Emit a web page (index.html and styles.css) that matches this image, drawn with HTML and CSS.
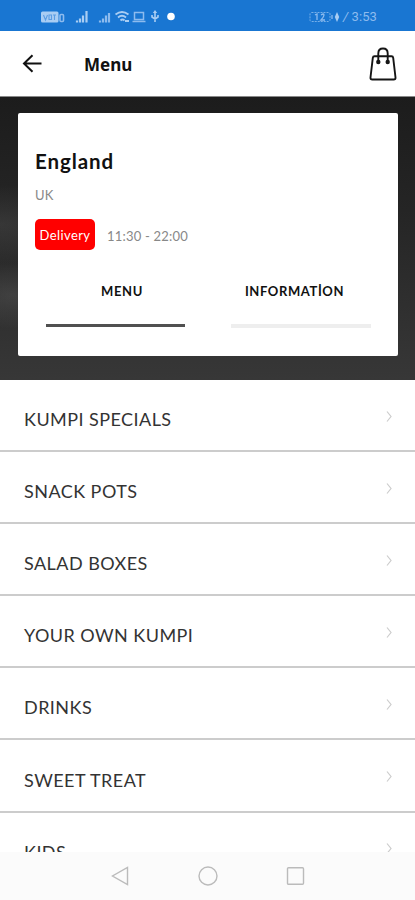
FILE: index.html
```html
<!DOCTYPE html>
<html lang="en">
<head>
    <meta charset="UTF-8">
    <meta name="viewport" content="width=device-width, initial-scale=1.0">
    <title>Menu</title>
    <link rel="stylesheet" href="styles.css">
</head>
<body>
    <div class="status-bar">
        <svg class="status-icons" width="136" height="16" viewBox="0 0 136 16">
            <!-- VoLTE badge -->
            <rect x="1" y="2.500" width="17.500" height="11" rx="1.500" fill="#a9cdf3"/>
            <path d="M3.500 6l2 5 2-5M9 6h2.500v4.500H9zM13 6h3M14.500 6v5" fill="none" stroke="#5b9de3" stroke-width="1.100"/>
            <rect x="20" y="5.500" width="3.500" height="7" rx="1" fill="none" stroke="#8dbbee" stroke-width="1.600"/>
            <!-- Signal -->
            <path d="M37 13.500v-2M40 13.500v-4M43 13.500V6.500M46.500 13.500V2" stroke="#a9cdf3" stroke-width="2.200"/>
            <path d="M60 13.500v-2M63 13.500v-4M66 13.500V6.500M69 13.500V4" stroke="#8dbbee" stroke-width="2.200"/>
            <!-- Wifi -->
            <path d="M75.500 5.500q6.500-5 13 0M78 8.500q4-3.500 8 0M80.500 11.500q2-2 4 0M85 12h4" fill="none" stroke="#a9cdf3" stroke-width="1.800"/>
            <!-- Laptop -->
            <path d="M94.500 3.500h9v7h-9zM92.500 12.500h13" fill="none" stroke="#8dbbee" stroke-width="1.500"/>
            <!-- Usb -->
            <path d="M115 3v10M112 6v2l3 2 3-2V6" fill="none" stroke="#a9cdf3" stroke-width="1.600"/>
            <path d="M115 1l2.200 3h-4.400z" fill="#a9cdf3"/>
            <circle cx="131" cy="7.500" r="3.800" fill="#fff"/>
        </svg>
        <div class="status-right">
            <svg width="33" height="12" viewBox="0 0 33 12">
                <rect x="3" y="1.500" width="20" height="9" rx="1.500" fill="none" stroke="#76afe9" stroke-dasharray="2 1"/>
                <path d="M8 4l2-1v6M14 4q3-2 3 0 0 2-3 5h4M25 4v4" fill="none" stroke="#8dbbee" stroke-width="1.300"/>
                <path d="M30 1l2.200 5-2.200 5-2.200-5z" fill="#a9cdf3"/>
            </svg>
            <span class="clock"><i>/</i> 3:53</span>
        </div>
    </div>

    <header class="header">
        <svg width="20" height="20" viewBox="0 0 20 20">
            <path d="M19.500 9.500H2M10.500 1.300L2 9.500l8.500 8.200" fill="none" stroke="#111" stroke-width="2"/>
        </svg>
        <h1>Menu</h1>
        <svg class="bag" width="28" height="34" viewBox="0 0 28 34">
            <path d="M5.500 9.300h17q1.500 0 1.700 1.500L26.500 30.500q.2 2-1.800 2H3.300q-2 0-1.800-2L3.800 10.800q.2-1.500 1.700-1.500z" fill="none" stroke="#151515" stroke-width="1.900"/>
            <path d="M9.300 15V6.500q0-5 4.700-5t4.700 5V15" fill="none" stroke="#151515" stroke-width="1.900"/>
            <circle cx="9.300" cy="15" r="2.200" fill="#151515"/>
            <circle cx="18.700" cy="15" r="2.200" fill="#151515"/>
        </svg>
    </header>

    <section class="hero">
        <div class="card">
            <h2>England</h2>
            <p class="country">UK</p>
            <div class="hours">
                <span class="badge">Delivery</span>
                <span class="time">11:30 - 22:00</span>
            </div>
            <div class="tabs">
                <div class="tab active"><span class="tab-menu">MENU</span></div>
                <div class="tab"><span class="tab-info">INFORMATİON</span></div>
            </div>
        </div>
    </section>

    <ul class="menu-list">
        <li><span>KUMPI SPECIALS</span><svg class="chevron" viewBox="0 0 6 11"><path d="M1 .5l4 5-4 5"/></svg></li>
        <li><span>SNACK POTS</span><svg class="chevron" viewBox="0 0 6 11"><path d="M1 .5l4 5-4 5"/></svg></li>
        <li><span>SALAD BOXES</span><svg class="chevron" viewBox="0 0 6 11"><path d="M1 .5l4 5-4 5"/></svg></li>
        <li><span>YOUR OWN KUMPI</span><svg class="chevron" viewBox="0 0 6 11"><path d="M1 .5l4 5-4 5"/></svg></li>
        <li><span>DRINKS</span><svg class="chevron" viewBox="0 0 6 11"><path d="M1 .5l4 5-4 5"/></svg></li>
        <li><span>SWEET TREAT</span><svg class="chevron" viewBox="0 0 6 11"><path d="M1 .5l4 5-4 5"/></svg></li>
        <li><span>KIDS</span><svg class="chevron" viewBox="0 0 6 11"><path d="M1 .5l4 5-4 5"/></svg></li>
    </ul>

    <nav class="nav-bar">
        <svg width="20" height="20" viewBox="0 0 20 20"><path d="M17.500 1.500v17L2.500 10z"/></svg>
        <svg width="20" height="20" viewBox="0 0 20 20"><circle cx="10" cy="10" r="9"/></svg>
        <svg width="20" height="20" viewBox="0 0 20 20"><rect x="1.500" y="1.700" width="16" height="16.500" rx="1"/></svg>
    </nav>
</body>
</html>
```
FILE: styles.css
```css
* {
    box-sizing: border-box;
}
body {
    margin: 0;
    height: 900px;
    display: flex;
    flex-direction: column;
    overflow: hidden;
    background: #fff;
    font-family: Lato, sans-serif;
    color: #111;
}
h1, h2, p, ul {
    margin: 0;
    padding: 0;
}
.status-bar {
    height: 31px;
    flex-shrink: 0;
    display: flex;
    justify-content: space-between;
    align-items: center;
    padding: 2px 38px 0 40px;
    background: #1976d2;
}
.status-right {
    display: flex;
    align-items: center;
    gap: 3px;
}
.clock {
    font-family: Roboto, sans-serif;
    font-size: 13px;
    letter-spacing: 0.1px;
    color: #8dbbee;
}
.header {
    height: 66px;
    flex-shrink: 0;
    display: flex;
    align-items: center;
    padding: 0 18px 0 22px;
    border-bottom: 1px solid #888;
}
.header h1 {
    margin: 2px 0 0 42px;
    font-family: "Noto Sans", sans-serif;
    font-size: 17px;
    font-weight: 700;
}
.bag {
    margin-left: auto;
}
.hero {
    height: 283px;
    flex-shrink: 0;
    padding: 16px 17px 24px 18px;
    background:
        radial-gradient(ellipse at 0 45%, rgba(120, 120, 120, 0.2), transparent 18%),
        radial-gradient(ellipse at 3% 70%, rgba(120, 120, 120, 0.25), transparent 12%),
        linear-gradient(#1c1c1c, #252525 40%, #373737);
}
.card {
    height: 243px;
    padding: 36px 17px 0;
    background: #fff;
    border-radius: 2px;
}
.card h2 {
    font-size: 20.5px;
    line-height: 24px;
    font-weight: 700;
    letter-spacing: 0.9px;
}
.country {
    margin-top: 13px;
    font-size: 13px;
    line-height: 18px;
    letter-spacing: 0.3px;
    color: #888;
}
.hours {
    display: flex;
    align-items: center;
    gap: 12px;
    margin-top: 15px;
}
.badge {
    width: 60px;
    height: 31px;
    line-height: 32px;
    text-align: center;
    font-size: 13px;
    letter-spacing: 0.4px;
    color: #fff;
    background: #f00;
    border-radius: 5px;
}
.time {
    padding-top: 2px;
    font-size: 13px;
    letter-spacing: 0.2px;
    color: #888;
}
.tabs {
    display: flex;
    justify-content: space-between;
    margin-top: 31px;
    padding: 0 10px 0 11px;
}
.tab {
    width: 140px;
    height: 47px;
    line-height: 20px;
    text-align: center;
    font-size: 13px;
    font-weight: 700;
    letter-spacing: 0.6px;
    border-bottom: 4px solid #eee;
    white-space: nowrap;
}
.tab.active {
    padding-left: 13px;
    border-bottom: 3px solid #505050;
    height: 46px;
    width: 139px;
}
.tab-info {
    padding-right: 13px;
}
.menu-list {
    flex: 1;
    min-height: 0;
    overflow: hidden;
    list-style: none;
}
.menu-list li {
    height: 72.1px;
    display: flex;
    align-items: center;
    justify-content: space-between;
    padding: 8px 23px 0 24px;
    border-bottom: 2px solid #ccc;
    font-size: 18px;
    letter-spacing: 0.45px;
    color: #333;
}
.chevron {
    width: 6px;
    height: 11px;
    margin-bottom: 6px;
    fill: none;
    stroke: #ccc;
    stroke-width: 1.2;
}
.nav-bar {
    height: 48px;
    flex-shrink: 0;
    display: flex;
    justify-content: center;
    align-items: center;
    gap: 68px;
    background: #fbfbfb;
}
.nav-bar svg {
    fill: none;
    stroke: #bbb;
    stroke-width: 1.4;
}
```
